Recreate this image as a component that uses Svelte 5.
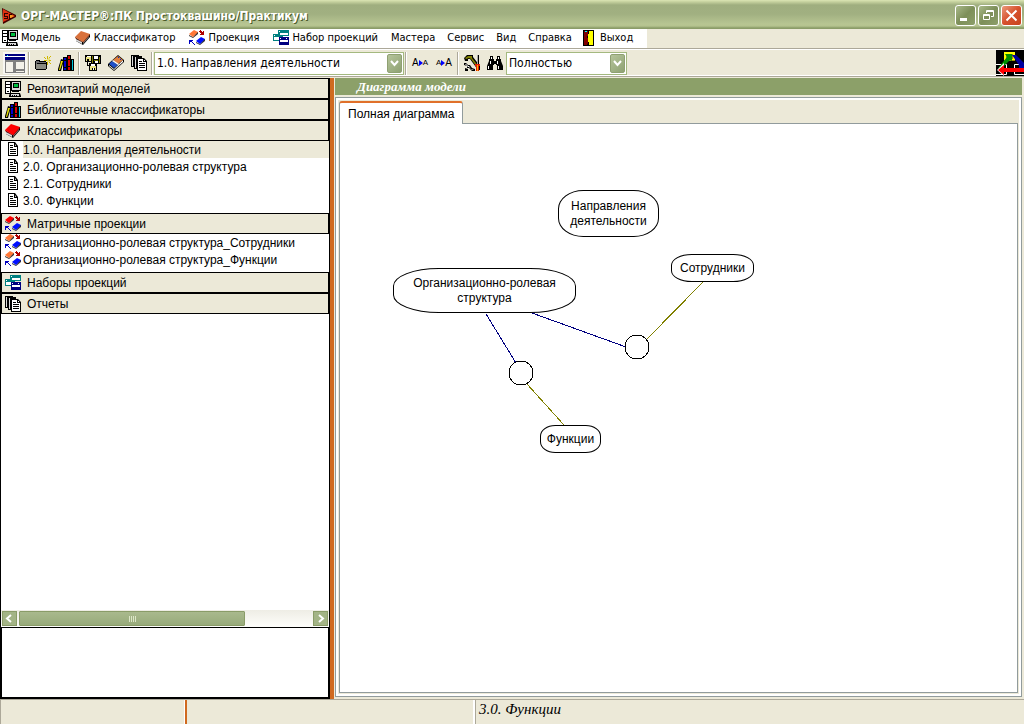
<script lang="ts">
  // each icon is a list of [fill, path] layers on a 16x16 grid
  const book = (cover: string, edge: string) => [
    ['#000', 'M1 8l6 4 7-8h1v3l-7 8-7-4z'],
    ['#d8d8d8', 'M1 9l6 3v2l-6-3z'],
    ['#888', 'M8 12l6-7v2l-6 7z'],
    [edge, 'M0 7l7 4v1L0 8zM8 11l7-7v1l-7 8z'],
    [cover, 'M0 7l6-6 9 3-7 8z']
  ];

  const matrix = (cover: string) => [
    ['#333', 'M0 5l4 2 4-5h1v2L4 8 0 6zM7 12l4 2 4-5h1v2l-5 4-4-2z'],
    [cover, 'M0 4l5-4 4 2-5 5z'],
    ['#0010ff', 'M7 11l5-4 4 2-5 5z'],
    ['#b00000', 'M11 0h1v1h1v1h1V1h1v4h-4V4h1V3h-1V2h-1V1h1z'],
    ['#0000c0', 'M0 10h4v1H3v1h1v1h1v1h1v1H5v-1H4v-1H3v-1H1v2H0z']
  ];

  const icons: Record<string, string[][]> = {
    computer: [
      ['#000', 'M0 0h6v13H0zM6 0h10v10H6zM7 10h7v1H7zM5 12h10l1 3v1H4v-1z'],
      ['#fff', 'M1 1h4v2H1zM1 4h4v2H1zM1 7h4v5H1z'],
      ['#d8d8d8', 'M7 1h8v8H7zM6 13h8v2H6z'],
      ['#000', 'M8 2h6v5H8zM2 10h2v1H2zM7 14h1v1H7zM9 14h1v1H9zM11 14h1v1h-1z'],
      ['#00c040', 'M9 3h4v3H9z']
    ],
    orangeBook: book('#d9713c', '#7a2c10'),
    redBook: book('#ff0000', '#900000'),
    matrix: matrix('#ff7838'),
    redMatrix: matrix('#ff0000'),
    windows: [
      ['#008080', 'M5 0h11v6H5zM0 4h10v7H0z'],
      ['#fff', 'M7 3h8v2H7zM1 7h5v3H1zM6 1h1v1H6zM1 5h1v1H1z'],
      ['#000080', 'M6 7h10v8H6z'],
      ['#fff', 'M7 10h8v2H7zM7 8h1v1H7zM13 8h1v1h-1z']
    ],
    door: [
      ['#000', 'M2 0h11v16H2z'],
      ['#ffff00', 'M7 1h5v14H7z'],
      ['#800000', 'M3 1h4v12l-1 2H3z'],
      ['#00ffff', 'M4 1h2v1H4z'],
      ['#000', 'M7 1h1v3H7zM6 6h1v2H6zM7 12h1v3H7z']
    ],
    folder: [
      ['#000', 'M1 5h4v1h6v1h1v7h-1v1H1v-1H0V6h1z'],
      ['#707070', 'M1 6h3v1h7v7H1z'],
      ['#8a8a80', 'M1 9h10v5H1z'],
      ['#000', 'M2 8h9v1H2z'],
      ['#e8e080', 'M12 3h3v4h-3z'],
      ['#d0b800', 'M12 1h1v3h-1zM9 2h1v1h1v1h-1V3H9zM15 1h1v1h-1v1h-1V2h1zM9 5h3v1H9zM14 5h2v1h-2zM12 7h1v3h-1zM14 7h1v1h1v1h-1V8h-1z']
    ],
    books: [
      ['#000', 'M3 4l3 1-3 11H0v-2zM5 2h4v14H5zM9 0h4v16H9zM13 4h3v12h-3z'],
      ['#e8e000', 'M3 6h2l-3 9H1z'],
      ['#0000d0', 'M6 3h2v12H6z'],
      ['#d80000', 'M10 1h2v14h-2z'],
      ['#00c8e0', 'M14 5h1v10h-1z'],
      ['#000', 'M6 5h2v1H6zM10 4h2v1h-2zM10 11h2v1h-2zM6 12h2v1H6z']
    ],
    disks: [
      ['#000', 'M0 0h7v7H0zM6 0h10v9H6zM4 8h8v8H4zM2 7h1v3h2v1H2z'],
      ['#fff', 'M2 1h4v1H2zM9 1h4v3H9zM6 9h4v2H6z'],
      ['#e8e080', 'M1 2h5v4H1zM5 11h6v4H5z'],
      ['#808000', 'M7 1h1v7H7zM14 2h1v6h-1zM9 5h4v1H9z'],
      ['#000', 'M2 4h2v2H2zM7 13h3v2H7z'],
      ['#fff', 'M10 6h3v2h-3zM8 13h1v2H8z']
    ],
    eraser: [
      ['#000', 'M0 9l10-9 6 5v2L6 16l-6-5z'],
      ['#fff', 'M1 10l5 4 9-9v2l-9 8-5-4z'],
      ['#e08040', 'M5 5l5-4 5 4-5 4z'],
      ['#2050c8', 'M1 9l3-3 6 4-4 3z'],
      ['#fff', 'M4 6l1-1 6 4-1 1z'],
      ['#0030c0', 'M10 2h1v1h-1zM12 4h1v1h-1z']
    ],
    docs: [
      ['#000', 'M0 0h8v1h3v2h2l3 3v10H6v-2H3v-2H0z'],
      ['#dcdcdc', 'M1 1h1v10H1zM4 2h1v11H4z'],
      ['#fff', 'M7 4h5v3h3v8H7z'],
      ['#000', 'M8 6h3v1H8zM8 8h6v1H8zM8 10h6v1H8zM8 12h6v1H8z'],
      ['#fff', 'M13 5h1v1h-1z']
    ],
    page: [
      ['#000', 'M3 1h7l3 4v10H3z'],
      ['#fff', 'M4 2h5v4h3v8H4zM10 3l1 2h-1z'],
      ['#000', 'M5 4h3v1H5zM5 6h3v1H5zM5 8h6v1H5zM5 10h6v1H5zM5 12h6v1H5z']
    ],
    tools: [
      ['#000', 'M0 3l3-3h6v2l7 9v4h-2L6 4H4v2H1zM0 8h2l2 2h2l2 3 3 1v2H8l-3-3H3v-2l-3-1zM1 13l3 1v2H1z'],
      ['#808000', 'M1 3l3-2h4v2l7 9v2h-1L7 4 5 3 2 4z'],
      ['#fff', 'M1 9h1l2 2h1l2 3 3 1H8l-3-3H4l-1-1z'],
      ['#a8a8a8', 'M13 0h1v9h-1z'],
      ['#000', 'M14 0h1v9h-1z'],
      ['#e02000', 'M11 9h5v2h-1v5h-3v-5h-1z'],
      ['#ffb000', 'M13 10h1v6h-1z']
    ],
    binoculars: [
      ['#000', 'M3 1h3v3h1v2h2V4h1V1h3v3h1v2l2 5v4h-6v-5H9v-1H7v1H6v5H0v-4l2-5V4h1z'],
      ['#fff', 'M4 2h1v2H4zM11 2h1v2h-1zM3 6h1v3H3zM10 6h1v3h-1zM1 11h1v3H1zM11 11h1v3h-1z']
    ]
  };

  const menu = [
    { label: 'Модель', icon: 'computer' },
    { label: 'Классификатор', icon: 'orangeBook' },
    { label: 'Проекция', icon: 'matrix' },
    { label: 'Набор проекций', icon: 'windows' },
    { label: 'Мастера' },
    { label: 'Сервис' },
    { label: 'Вид' },
    { label: 'Справка' },
    { label: 'Выход', icon: 'door' }
  ];

  const sections = [
    { label: 'Репозитарий моделей', icon: 'computer', items: [] },
    { label: 'Библиотечные классификаторы', icon: 'books', items: [] },
    {
      label: 'Классификаторы',
      icon: 'redBook',
      itemIcon: 'page',
      items: [
        '1.0. Направления деятельности',
        '2.0. Организационно-ролевая структура',
        '2.1. Сотрудники',
        '3.0. Функции'
      ]
    },
    {
      label: 'Матричные проекции',
      icon: 'redMatrix',
      itemIcon: 'matrix',
      items: [
        'Организационно-ролевая структура_Сотрудники',
        'Организационно-ролевая структура_Функции'
      ]
    },
    { label: 'Наборы проекций', icon: 'windows', items: [] },
    { label: 'Отчеты', icon: 'docs', items: [] }
  ];

  const nodes = [
    { label: 'Направления деятельности', x: 218, y: 66, w: 101, h: 47 },
    { label: 'Организационно-ролевая структура', x: 53, y: 144, w: 183, h: 45 },
    { label: 'Сотрудники', x: 331, y: 130, w: 83, h: 28 },
    { label: 'Функции', x: 200, y: 301, w: 61, h: 28 }
  ];

  let selected = $state('1.0. Направления деятельности');
</script>

{#snippet icon(name: string)}
  <svg class="icon" viewBox="0 0 16 16" aria-hidden="true">
    {#each icons[name] as [fill, d]}
      <path {fill} {d} />
    {/each}
  </svg>
{/snippet}

{#snippet arrow(d: string)}
  <svg class="arrow" viewBox="0 0 9 9" aria-hidden="true"><path {d} /></svg>
{/snippet}

<div class="window">
  <header class="title">
    <svg class="logo" viewBox="0 0 16 16" aria-hidden="true">
      <path fill="#400" d="M1 0l14 7v2L2 16z" />
      <path fill="#e03010" d="M2 1l12 7-12 6z" />
      <path fill="#f8a020" d="M8 6l5 2-5 3z" />
      <path fill="#300" d="M3 5h4v1H4v2h3v3H3v-1h3V9H3zM8 6h3v1H9v3h2v1H8z" />
    </svg>
    <h1>ОРГ-МАСТЕР®:ПК Простоквашино/Практикум</h1>
    <button aria-label="Свернуть">
      <svg viewBox="0 0 19 19"><path fill="#fff" d="M4 12h7v3H4z" /></svg>
    </button>
    <button aria-label="Восстановить">
      <svg viewBox="0 0 19 19"><path fill="none" stroke="#fff" d="M7.500 7V4.500h7v6H12M7 5.500h8M4.500 8.500h6v5h-6zM4 9.500h7" /></svg>
    </button>
    <button class="close" aria-label="Закрыть">
      <svg viewBox="0 0 19 19"><path fill="none" stroke="#fff" stroke-width="2" d="M4.500 4.500l10 10M14.500 4.500l-10 10" /></svg>
    </button>
  </header>

  <nav class="menubar">
    <div class="menu">
      {#each menu as item}
        <button class:with-icon={item.icon}>
          {#if item.icon}{@render icon(item.icon)}{/if}
          {item.label}
        </button>
      {/each}
    </div>
  </nav>

  <div class="toolbar">
    <button class="tool pressed" aria-label="Панели">
      <svg class="layout" viewBox="0 0 20 19" aria-hidden="true">
        <path fill="#808080" d="M0 5h20v14H0z" />
        <path fill="#000080" d="M0 0h20v2H0zM0 3h20v3H0z" />
        <path fill="#fff" d="M0 2h20v1H0z" />
        <path fill="#f4f2ea" d="M1 8h7v10H1zM11 8h8v7h-8zM11 17h8v1h-8z" />
        <path fill="#0ff" d="M2 1h1v1H2z" />
      </svg>
    </button>
    <span class="sep"></span>
    <button class="tool" aria-label="Новый">{@render icon('folder')}</button>
    <button class="tool" aria-label="Библиотека">{@render icon('books')}</button>
    <span class="sep"></span>
    <button class="tool" aria-label="Сохранить">{@render icon('disks')}</button>
    <button class="tool" aria-label="Очистить">{@render icon('eraser')}</button>
    <button class="tool" aria-label="Отчеты">{@render icon('docs')}</button>
    <span class="sep"></span>
    <div class="combo">
      <select aria-label="Классификатор">
        <option>1.0. Направления деятельности</option>
      </select>
      <span class="drop">{@render arrow('M1 2l3.500 4L8 2')}</span>
    </div>
    <span class="sep"></span>
    <button class="tool letters" aria-label="Уменьшить шрифт">
      <span class="big">A</span><svg viewBox="0 0 4 6"><path fill="#00f" d="M0 0l4 3-4 3z" /></svg><span>A</span>
    </button>
    <button class="tool letters" aria-label="Увеличить шрифт">
      <span>A</span><svg viewBox="0 0 4 6"><path fill="#00f" d="M0 0l4 3-4 3z" /></svg><span class="big">A</span>
    </button>
    <span class="sep"></span>
    <button class="tool" aria-label="Настройки">{@render icon('tools')}</button>
    <button class="tool" aria-label="Найти">{@render icon('binoculars')}</button>
    <div class="combo short">
      <select aria-label="Показ">
        <option>Полностью</option>
      </select>
      <span class="drop">{@render arrow('M1 2l3.500 4L8 2')}</span>
    </div>
    <svg class="brand" viewBox="0 0 28 26" aria-hidden="true">
      <path fill="#000" d="M0 0h28v26H0z" />
      <path fill="none" stroke="#fff" d="M0 14.500h10.500v10H0M28 14.500h-9.500v10H28" />
      <path fill="#a09000" d="M8 2h11v9H8z" />
      <path fill="#ffff00" d="M8 2h11v2H8zM8 4h2v6H8zM17 4h2v6h-2zM9 9h9v1H9z" />
      <path fill="#009000" d="M9 4h7v7l-2-1-8 8-4 2 1-3 8-10z" />
      <path fill="#0000a0" d="M16 5h4l8 8v5h-5v-3z" />
      <path fill="#fff" d="M1 20l7-7v13z" />
      <path fill="#ff0000" d="M2 20l6-5v3h20v4H8v3z" />
    </svg>
  </div>

  <main>
    <aside>
      <div class="tree">
        {#each sections as section}
          <button class="section">{@render icon(section.icon)}{section.label}</button>
          {#if section.items.length}
            <ul>
              {#each section.items as item}
                <li>
                  {@render icon(section.itemIcon)}
                  <button class:selected={item === selected} onclick={() => (selected = item)}>{item}</button>
                </li>
              {/each}
            </ul>
          {/if}
        {/each}
      </div>
      <div class="scrollbar">
        <button aria-label="Влево">{@render arrow('M6 1L2 4.500 6 8')}</button>
        <div class="track">
          <div class="thumb"><i></i><i></i><i></i><i></i></div>
        </div>
        <button aria-label="Вправо">{@render arrow('M3 1l4 3.500L3 8')}</button>
      </div>
      <div class="info"></div>
    </aside>
    <div class="splitter"></div>
    <section class="work">
      <h2>Диаграмма модели</h2>
      <div class="frame">
        <div class="tabs" role="tablist">
          <button role="tab" aria-selected="true">Полная диаграмма</button>
        </div>
        <div class="canvas">
          <svg class="links" aria-hidden="true">
            <path stroke="#000080" d="M146 190l30 49M192 189l94 34" />
            <path stroke="#808000" d="M363 158l-56 57M187 260l37 41" />
            <circle cx="297" cy="223" r="12" />
            <circle cx="181" cy="249" r="12" />
          </svg>
          {#each nodes as node}
            <div class="node" style="left: {node.x}px; top: {node.y}px; width: {node.w}px; height: {node.h}px">
              {node.label}
            </div>
          {/each}
        </div>
      </div>
    </section>
  </main>

  <footer>
    <div class="cell first"></div>
    <div class="cell second"></div>
    <div class="cell current">3.0. Функции</div>
  </footer>
</div>

<style>
  :global(body) {
    margin: 0;
  }
  .window {
    display: flex;
    flex-direction: column;
    min-height: 100vh;
    background: #ece9d8;
    color: #000;
    font: 12px/16px "Liberation Sans", Arial, sans-serif;
  }
  button {
    padding: 0;
    border: 0;
    background: none;
    color: inherit;
    font: inherit;
  }
  svg {
    display: block;
    flex: none;
  }
  .icon {
    width: 16px;
    height: 16px;
  }
  .arrow {
    width: 9px;
    height: 9px;
    fill: none;
    stroke: #fff;
    stroke-width: 2;
  }

  .title {
    display: flex;
    align-items: center;
    gap: 2px;
    box-sizing: border-box;
    height: 29px;
    padding: 2px 2px 0 1px;
    background: linear-gradient(#dbe5b4 0, #c3cf9c 2px, #9fae7f 5px, #a1b081 14px, #b7c592 24px, #b4c28e 26px, #8b9c68 28px);
  }
  .logo {
    width: 16px;
    height: 16px;
  }
  h1 {
    flex: 1;
    margin: 0 0 0 2px;
    color: #fff;
    font: bold 12px/18px "DejaVu Sans Condensed", "Open Sans", sans-serif;
    text-shadow: 1px 1px #4a5a28;
  }
  .title button {
    width: 21px;
    height: 21px;
    border: 1px solid #fff;
    border-radius: 3px;
    background: linear-gradient(135deg, #a9b98a, #7d8f59 50%, #8d9f6a);
  }
  .title button svg {
    width: 19px;
    height: 19px;
  }
  .title .close {
    background: linear-gradient(135deg, #eb9a7c, #d6512c 50%, #c8441f);
  }

  .menubar {
    display: flex;
    border-bottom: 1px solid #aca899;
  }
  .menu {
    display: flex;
    height: 18px;
    border-bottom: 1px solid #fff;
    background: #fff;
    font: 11px/18px "DejaVu Sans Condensed", Tahoma, sans-serif;
  }
  .menu button {
    display: flex;
    align-items: center;
    gap: 3px;
    padding: 0 6px;
  }
  .menu .with-icon {
    padding: 0 7px;
  }
  .menu .with-icon:first-child {
    padding-left: 2px;
  }
  .menu .with-icon:last-child {
    padding: 0 14px 0 3px;
  }

  .toolbar {
    display: flex;
    align-items: center;
    height: 26px;
    padding-left: 3px;
    border-top: 1px solid #fff;
    border-bottom: 1px solid #aca899;
    box-shadow: inset 0 -1px #fff;
  }
  .tool {
    display: flex;
    align-items: center;
    justify-content: center;
    width: 23px;
    height: 22px;
  }
  .pressed {
    width: 24px;
    background: #f8f7f2;
  }
  .layout {
    width: 20px;
    height: 19px;
  }
  .sep {
    width: 1px;
    height: 23px;
    margin: 0 1px;
    border-right: 1px solid #fff;
    background: #aca899;
  }
  .letters {
    width: 24px;
    font: 8px/16px "Liberation Sans", sans-serif;
  }
  .letters .big {
    font-size: 10px;
  }
  .letters svg {
    width: 4px;
    height: 6px;
  }
  .combo {
    position: relative;
    width: 250px;
  }
  .short {
    width: 121px;
  }
  select {
    display: block;
    width: 100%;
    height: 23px;
    padding: 0 20px 0 2px;
    border: 1px solid #a4b97f;
    border-radius: 0;
    appearance: none;
    background: #fff;
    color: #000;
    font: 12px/20px "DejaVu Sans Condensed", Tahoma, sans-serif;
  }
  .drop {
    position: absolute;
    top: 2px;
    right: 2px;
    display: grid;
    place-items: center;
    box-sizing: border-box;
    width: 15px;
    height: 19px;
    border: 1px solid #8fa072;
    border-radius: 2px;
    background: linear-gradient(135deg, #b5c49a, #8fa273);
    pointer-events: none;
  }
  .brand {
    width: 28px;
    height: 26px;
    margin-left: auto;
  }

  main {
    display: flex;
    flex: 1;
    padding-top: 1px;
  }
  aside {
    display: flex;
    flex-direction: column;
    box-sizing: border-box;
    width: 330px;
    border: 1px solid #000;
    border-top: 0;
    background: #fff;
  }
  .tree {
    flex: 1;
  }
  .section {
    display: flex;
    align-items: center;
    gap: 6px;
    box-sizing: border-box;
    width: 100%;
    height: 21px;
    padding-left: 3px;
    border: 1px solid #000;
    background: #ece9d8;
  }
  ul {
    margin: 0;
    padding: 0 0 4px 4px;
    list-style: none;
  }
  li {
    display: flex;
    gap: 2px;
  }
  li button {
    flex: 1;
    height: 17px;
    text-align: left;
    white-space: nowrap;
  }
  li .selected {
    background: #ece9d8;
  }
  .scrollbar {
    display: flex;
    height: 17px;
    background: linear-gradient(#eeede5, #fefefb);
  }
  .scrollbar button {
    display: grid;
    place-items: center;
    width: 15px;
    height: 15px;
    margin: 1px;
    border: 1px solid #8a9c68;
    box-sizing: border-box;
    background: #a3b486;
  }
  .track {
    flex: 1;
  }
  .thumb {
    display: flex;
    align-items: center;
    justify-content: center;
    gap: 1px;
    box-sizing: border-box;
    width: 77%;
    height: 15px;
    margin: 1px;
    border: 1px solid #8a9c68;
    border-radius: 1px;
    background: linear-gradient(#a9b98d, #98ab7b);
  }
  .thumb i {
    width: 1px;
    height: 6px;
    background: #dde6c8;
  }
  .info {
    height: 69px;
    border: 1px solid #000;
  }
  .splitter {
    width: 4px;
    background: #d06a20;
  }

  .work {
    display: flex;
    flex: 1;
    flex-direction: column;
    padding: 0 2px 2px 1px;
  }
  h2 {
    margin: 0 0 2px;
    padding-left: 22px;
    background: #8ca069;
    color: #fff;
    font: italic bold 13px/17px "Liberation Serif", serif;
  }
  .frame {
    display: flex;
    flex: 1;
    flex-direction: column;
    padding: 3px;
    border: 1px solid #919b9c;
    box-shadow: inset 0 0 0 2px #fff;
  }
  .tabs {
    display: flex;
    height: 22px;
  }
  .tabs button {
    position: relative;
    z-index: 1;
    height: 23px;
    padding: 0 8px;
    border: 1px solid #919b9c;
    border-top: 2px solid #e0702a;
    border-bottom: 0;
    border-radius: 3px 3px 0 0;
    background: #fff;
  }
  .canvas {
    position: relative;
    flex: 1;
    border: 1px solid #919b9c;
    background: #fff;
  }
  .links {
    width: 100%;
    height: 100%;
    position: absolute;
    shape-rendering: crispEdges;
  }
  circle {
    fill: #fff;
    stroke: #000;
  }
  .node {
    position: absolute;
    display: grid;
    place-items: center;
    box-sizing: border-box;
    border: 1px solid #000;
    border-radius: 25% / 40%;
    background: #fff;
    line-height: 15px;
    text-align: center;
  }

  footer {
    display: flex;
    height: 24px;
    border-top: 1px solid #aca899;
  }
  .cell {
    box-sizing: border-box;
    border-left: 1px solid #aca899;
  }
  .first {
    width: 185px;
    border-right: 1px solid #fff;
  }
  .second {
    width: 290px;
    border-right: 2px solid #fff;
    border-left: 2px solid #d06a20;
  }
  .current {
    flex: 1;
    padding-left: 3px;
    font: italic 15px/19px "Liberation Serif", serif;
  }
</style>
